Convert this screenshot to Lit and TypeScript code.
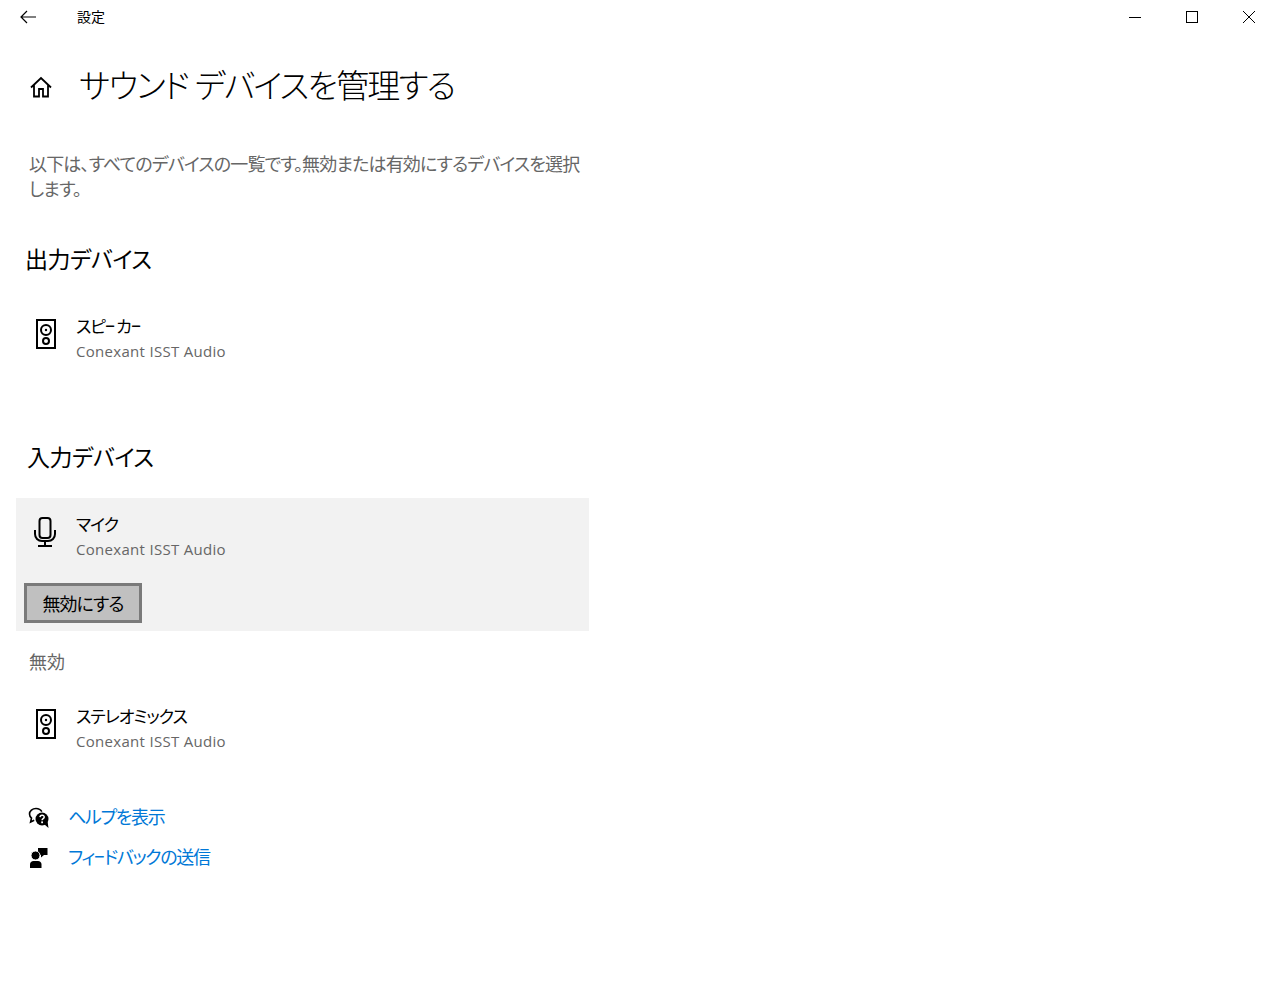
import { LitElement, html, css } from "lit";
import { customElement } from "lit/decorators.js";

const speaker = html`<svg width="20" height="30" viewBox="0 0 20 30" fill="none" stroke="#000" stroke-width="2">
  <rect x="1" y="1" width="18" height="28"></rect>
  <circle cx="10" cy="11" r="5"></circle>
  <circle cx="10" cy="11" r="1.2" fill="#000" stroke="none"></circle>
  <circle cx="10" cy="22" r="3"></circle>
</svg>`;

const mic = html`<svg width="26" height="30" viewBox="0 0 26 30" fill="none" stroke="#000" stroke-width="2">
  <rect x="6.500" y="1" width="11" height="20" rx="3"></rect>
  <path d="M2 13v4c0 4 3 7 7 7h6c4 0 7-3 7-7v-4M12 24v5M5 29h14"></path>
</svg>`;

const helpIcon = html`<svg width="22" height="22" viewBox="0 0 22 22">
  <path d="M8 1.500c-3.600 0-6.500 2.500-6.500 5.600 0 1.600.8 3 2 4L2.600 15l3.600-1.700" fill="none" stroke="#000" stroke-width="1.600"></path>
  <path d="M8 1.500c2.600 0 4.800 1.300 5.800 3.200" fill="none" stroke="#000" stroke-width="1.600"></path>
  <circle cx="14" cy="12" r="6.500" fill="#000"></circle>
  <path d="M16 17l4.500 4-1-7z" fill="#000"></path>
  <path d="M12 10.100c.2-2.600 4.400-2.400 4.200 0 0 1.600-2.100 1.500-2.100 3.100" fill="none" stroke="#fff" stroke-width="1.500"></path>
  <rect x="13.200" y="14.400" width="1.800" height="1.800" fill="#fff"></rect>
</svg>`;

const feedbackIcon = html`<svg width="20" height="22" viewBox="0 0 20 22" fill="#000">
  <path d="M9 1h9.500v7H15l-3 2.500V8H9z"></path>
  <circle cx="6.500" cy="8.500" r="4.500" stroke="#fff"></circle>
  <path d="M1 21v-3.500c0-2 1.500-3.500 3.500-3.500h4.500c2 0 3.500 1.500 3.500 3.500V21z"></path>
</svg>`;

// the reference font has a much shorter long-vowel mark than Noto
const shortDash = (text: string) =>
  text.split(/(ー)/).map((part) => (part === "ー" ? html`<span class="dash">ー</span>` : part));

const dashStyles = css`
  .dash {
    display: inline-block;
    width: 0.55em;
    transform: scaleX(0.6);
    transform-origin: left;
  }
`;

@customElement("device-row")
export class DeviceRow extends LitElement {
  static properties = { name: {}, sub: {} };
  name = "";
  sub = "Conexant ISST Audio";

  static styles = [
    dashStyles,
    css`
      :host {
        display: flex;
        align-items: center;
        height: 56px;
      }
      .icon {
        width: 60px;
        display: flex;
        justify-content: center;
        padding-bottom: 9px;
      }
      .name {
        font-size: 17px;
        line-height: 25px;
        letter-spacing: -1px;
        color: #000;
      }
      .name .dash {
        width: 0.65em;
      }
      .sub {
        font-size: 15px;
        line-height: 24px;
        letter-spacing: 0.3px;
        color: #666;
      }
    `,
  ];

  render() {
    return html`
      <div class="icon"><slot></slot></div>
      <div>
        <div class="name">${shortDash(this.name)}</div>
        <div class="sub">${this.sub}</div>
      </div>
    `;
  }
}

@customElement("app-root")
export class AppRoot extends LitElement {
  static styles = [
    dashStyles,
    css`
      :host {
        display: block;
        height: 993px;
        background: #fff;
        font-family: "Open Sans", "Noto Sans CJK JP", sans-serif;
        font-feature-settings: "palt";
        color: #000;
        overflow: hidden;
      }
      .titlebar {
        display: flex;
        align-items: center;
        gap: 9px;
        height: 34px;
      }
      .back {
        width: 68px;
        padding-left: 19px;
        box-sizing: border-box;
        display: flex;
      }
      .app-name {
        flex: 1;
        font-size: 14px;
        padding-bottom: 2px;
      }
      .win {
        width: 48px;
        display: flex;
        justify-content: center;
      }
      .page {
        width: 573px;
        margin-left: 16px;
      }
      .heading {
        display: flex;
        align-items: center;
        height: 70px;
        margin-top: 15px;
      }
      .home {
        width: 63px;
        padding: 6px 0 0 14px;
        box-sizing: border-box;
        display: flex;
      }
      h1 {
        margin: 0;
        font-size: 33px;
        font-weight: 300;
        letter-spacing: -1.8px;
      }
      .intro {
        margin: 33px 4px 0 13px;
        font-size: 18px;
        line-height: 25px;
        letter-spacing: -0.85px;
        color: #666;
      }
      h2 {
        margin: 0;
        font-size: 23px;
        font-weight: 400;
        line-height: 36px;
        letter-spacing: -0.5px;
      }
      .out {
        margin: 39px 0 0 9px;
      }
      .in {
        margin: 73px 0 0 11px;
      }
      .rows {
        margin-top: 33px;
      }
      .selected {
        background: #f2f2f2;
        margin-top: 23px;
        height: 133px;
      }
      .selected device-row {
        padding-top: 10px;
      }
      .btn {
        display: block;
        box-sizing: border-box;
        width: 118px;
        height: 40px;
        margin: 19px 0 0 8px;
        background: #c0c0c0;
        border: 3px solid #7a7a7a;
        font: inherit;
        font-size: 18px;
        letter-spacing: -1px;
        color: #000;
        padding: 0;
      }
      .disabled {
        margin: 18px 0 0 13px;
        font-size: 18px;
        line-height: 26px;
        color: #666;
      }
      .stereo {
        margin-top: 25px;
      }
      .links {
        margin: 46px 0 0 12px;
        display: flex;
        flex-direction: column;
        gap: 12px;
      }
      .link {
        display: flex;
        align-items: center;
        height: 28px;
        font-size: 18px;
        letter-spacing: -1.3px;
        color: #0078d7;
      }
      .link-icon {
        width: 22px;
        display: flex;
        justify-content: center;
        margin-right: 18px;
        padding-top: 4px;
      }
    `,
  ];

  render() {
    return html`
      <div class="titlebar">
        <div class="back">
          <svg width="18" height="16" viewBox="0 0 18 16" fill="none" stroke="#000" stroke-width="1.2">
            <path d="M17 8H2M8 2L2 8l6 6"></path>
          </svg>
        </div>
        <div class="app-name">設定</div>
        <div class="win">
          <svg width="14" height="14" viewBox="0 0 14 14" stroke="#000" fill="none"><path d="M1 7.500h12"></path></svg>
        </div>
        <div class="win">
          <svg width="14" height="14" viewBox="0 0 14 14" stroke="#000" fill="none"><rect x="1.500" y="1.500" width="11" height="11"></rect></svg>
        </div>
        <div class="win">
          <svg width="14" height="14" viewBox="0 0 14 14" stroke="#000" fill="none"><path d="M1 1l12 12M13 1L1 13"></path></svg>
        </div>
      </div>

      <div class="page">
        <div class="heading">
          <div class="home">
            <svg width="22" height="22" viewBox="0 0 22 22" fill="none" stroke="#000" stroke-width="1.800">
              <path d="M1 11.500L11 2l10 9.500M4 9v11.500h5V13h4v7.500h5V9"></path>
            </svg>
          </div>
          <h1>サウンド デバイスを管理する</h1>
        </div>

        <p class="intro">以下は、すべてのデバイスの一覧です。無効または有効にするデバイスを選択します。</p>

        <h2 class="out">出力デバイス</h2>
        <div class="rows">
          <device-row name="スピーカー">${speaker}</device-row>
        </div>

        <h2 class="in">入力デバイス</h2>
        <div class="selected">
          <device-row name="マイク">${mic}</device-row>
          <button class="btn">無効にする</button>
        </div>

        <div class="disabled">無効</div>
        <div class="stereo">
          <device-row name="ステレオミックス">${speaker}</device-row>
        </div>

        <div class="links">
          <div class="link"><div class="link-icon">${helpIcon}</div>ヘルプを表示</div>
          <div class="link"><div class="link-icon">${feedbackIcon}</div>${shortDash("フィードバックの送信")}</div>
        </div>
      </div>
    `;
  }
}
